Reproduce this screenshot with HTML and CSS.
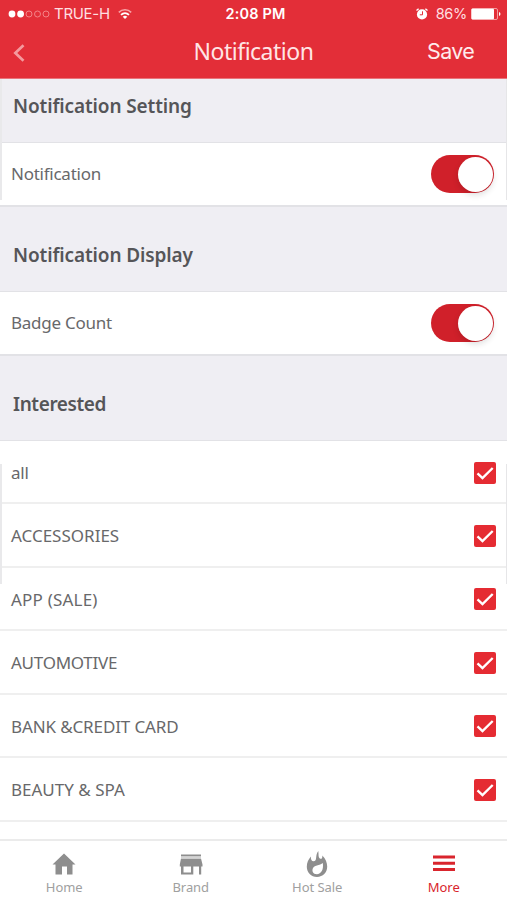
FILE: index.html
```html
<!DOCTYPE html>
<html lang="en">
<head>
<meta charset="utf-8">
<title>Notification</title>
<link rel="stylesheet" href="styles.css">
</head>
<body>
<div class="app">
  <header class="header">
    <div class="status">
      <div class="carrier">
        <svg width="42" height="10" viewBox="0 0 42 10"><g fill="#fff"><circle cx="4" cy="5" r="3.4"/><circle cx="12.6" cy="5" r="3.4"/></g><g fill="none" stroke="#f58b90" stroke-width=".9"><circle cx="21" cy="5" r="3"/><circle cx="29.5" cy="5" r="3"/><circle cx="38" cy="5" r="3"/></g></svg>
        <span class="network">TRUE-H</span>
        <svg class="wifi" width="14" height="12" viewBox="0 0 14 12" fill="none" stroke="#fff"><path d="M.8 4.3a9 9 0 0 1 12.4 0" stroke="#f8a5a8" stroke-width="1.6"/><path d="M3 6.8a6 6 0 0 1 8 0" stroke-width="1.8"/><path d="M4.7 8.7a3.4 3.4 0 0 1 4.6 0L7 11z" fill="#fff" stroke="none"/></svg>
      </div>
      <span class="time">2:08 PM</span>
      <div class="power">
        <svg width="12" height="12" viewBox="0 0 12 12"><circle cx="6" cy="6.4" r="5.1" fill="#fff"/><path d="M.5 2.6 2.6.7M11.5 2.6 9.4.7" stroke="#fff" stroke-width="1.3"/><path d="M6.5 3.3v3.5H3.8" fill="none" stroke="#e32e38"/></svg>
        <span class="percent">86%</span>
        <svg class="battery" width="30" height="12" viewBox="0 0 30 12"><rect x=".5" y=".5" width="26" height="11" rx="1.5" fill="none" stroke="#f8b5b8" stroke-width=".8"/><rect x=".5" y=".7" width="22.5" height="10.6" rx="1" fill="#fff"/><path d="M28 4c2 .7 2 3.3 0 4z" fill="#fff"/></svg>
      </div>
    </div>
    <nav class="navbar">
      <svg class="back" width="12" height="18" viewBox="0 0 12 18"><path d="M10.5 1.3 2.3 9l8.2 7.7" fill="none" stroke="#f49a9e" stroke-width="2.7"/></svg>
      <h1 class="title">Notification</h1>
      <span class="save">Save</span>
    </nav>
  </header>
  <main class="content">
    <section class="edged top">
      <h2 class="section first">Notification Setting</h2>
      <div class="row"><span class="tight">Notification</span><span class="switch"></span></div>
    </section>
    <h2 class="section">Notification Display</h2>
    <div class="row"><span class="tight">Badge Count</span><span class="switch"></span></div>
    <h2 class="section interested">Interested</h2>
    <ul class="list edged middle">
      <li class="item"><span class="tight">all</span><svg class="check" viewBox="0 0 22 22"><path d="m3.5 11.3 5 4.7L18.7 6"/></svg></li>
      <li class="item"><span>ACCESSORIES</span><svg class="check" viewBox="0 0 22 22"><path d="m3.5 11.3 5 4.7L18.7 6"/></svg></li>
      <li class="item"><span class="wide">APP (SALE)</span><svg class="check" viewBox="0 0 22 22"><path d="m3.5 11.3 5 4.7L18.7 6"/></svg></li>
      <li class="item"><span class="tight">AUTOMOTIVE</span><svg class="check" viewBox="0 0 22 22"><path d="m3.5 11.3 5 4.7L18.7 6"/></svg></li>
      <li class="item"><span class="snug">BANK &amp;CREDIT CARD</span><svg class="check" viewBox="0 0 22 22"><path d="m3.5 11.3 5 4.7L18.7 6"/></svg></li>
      <li class="item"><span>BEAUTY &amp; SPA</span><svg class="check" viewBox="0 0 22 22"><path d="m3.5 11.3 5 4.7L18.7 6"/></svg></li>
    </ul>
  </main>
  <footer class="tabs">
    <a class="tab"><svg width="26" height="26" viewBox="0 0 26 26"><path fill="currentColor" d="M13 1.500 24.500 12.500H21.500V22.500h-5.500v-8h-5v8H4.500V12.500h-3z"/></svg><span>Home</span></a>
    <a class="tab"><svg width="26" height="26" viewBox="0 0 26 26"><path fill="currentColor" fill-rule="evenodd" d="M3 2.500h20v2H3zM3 6.500h20l1.500 6v2h-1.300v8h-2.200v-8h-5.700v8H3v-8H1.800v-2zM5.500 14.500v6h7.500v-6z"/><path d="M3 4.500h20v2H3z" fill="#d4d4d4"/></svg><span>Brand</span></a>
    <a class="tab"><svg width="26" height="28" viewBox="0 0 26 28"><path fill="currentColor" fill-rule="evenodd" d="M14.300 1c.5 3.200-.3 6 1.500 7.500 1.600 1 2.900-.7 2.500-3.100 3.300 3.200 4.900 7 4.900 11.200 0 6-4.400 10.400-10.200 10.400S2.800 22.600 2.800 16.800c0-4.200 1.700-7.500 4.100-10.300-.2 3 .7 4.800 2.600 4.800 4.300 0 1.200-5.900 4.800-10.300zM18.800 13c-2.500 2.600-9.600 1.800-10.300 6.500-.4 3 1.600 4.700 4.300 4.700 4.400 0 7-4.700 6-11.200z"/></svg><span>Hot Sale</span></a>
    <a class="tab active"><svg width="26" height="26" viewBox="0 0 26 26"><path fill="currentColor" d="M2 3.500h22v3H2zm0 6.200h22v3H2zm0 6.300h22v3H2z"/></svg><span>More</span></a>
  </footer>
</div>
</body>
</html>
```
FILE: styles.css
```css
* { box-sizing: border-box; }
body { margin: 0; font-family: "Noto Sans", sans-serif; background: #fff; color: #68686a; }
.app { width: 507px; height: 900px; display: flex; flex-direction: column; overflow: hidden; }
svg { display: block; flex: none; }
.header { height: 79px; flex: none; background: #e32e38; color: #fff; border-bottom: 1px solid #e8747b; }
.status { height: 27px; display: grid; grid-template-columns: 1fr auto 1fr; align-items: center; font: 15px/27px Inter, sans-serif; padding: 0 6px 0 8px; }
.carrier, .power { display: flex; align-items: center; color: #ffdfe0; }
.power { justify-content: flex-end; }
.network { margin-left: 4px; letter-spacing: -.3px; }
.wifi { margin-left: 8px; }
.time { font-weight: 600; font-size: 14.5px; letter-spacing: .15px; padding-left: 2px; }
.percent { margin: 0 4px 0 8px; font-size: 14.5px; letter-spacing: -.3px; }
.navbar { height: 51px; display: grid; grid-template-columns: 1fr auto 1fr; align-items: center; padding: 0 33px 0 13px; }
.title { margin: 0 0 0 20px; font-size: 23px; line-height: 48px; height: 51px; font-weight: 400; letter-spacing: -.5px; color: #ffe5e6; }
.save { justify-self: end; height: 51px; font: 21.5px/49px Inter, sans-serif; letter-spacing: -.7px; color: #ffebec; }
.content { flex: 1; min-height: 0; overflow: hidden; }
.edged { position: relative; }
.edged::before { content: ""; position: absolute; left: 0; right: 0; top: 0; height: 121px; border-left: 2px solid #e9e9eb; border-right: 1px solid #e6e6e8; }
.middle::before { top: 23px; height: 120px; }
.section { margin: 0; height: 87px; padding: 12px 13px 0; display: flex; align-items: center; background: #efeef3; border-top: 2px solid #e2e2e6; border-bottom: 1px solid #e2e2e6; font-size: 19px; font-weight: 650; letter-spacing: -.12px; color: #555558; }
.section.first { height: 64px; padding: 0 13px 9px; border-top: 0; }
.section.interested { letter-spacing: -.4px; }
.row { height: 62px; padding: 0 13px 0 11px; display: flex; align-items: center; justify-content: space-between; font-size: 17px; }
.row span:first-child { padding-bottom: 1px; }
.tight { letter-spacing: -.25px; }
.snug { letter-spacing: -.12px; }
.wide { letter-spacing: .2px; }
.switch { width: 63px; height: 38px; padding: 1.5px; border-radius: 19px; background: #d0202a; display: flex; justify-content: flex-end; }
.switch::after { content: ""; width: 35px; height: 35px; border-radius: 50%; background: #fff; box-shadow: 0 3px 6px #0002; }
.list { margin: 0; padding: 0; list-style: none; }
.item { height: 63.5px; padding: 2px 11px 0; display: flex; align-items: center; justify-content: space-between; border-bottom: 2px solid #efefef; font-size: 17px; }
.item:first-child { height: 63px; }
.check { width: 22px; height: 22px; border-radius: 2px; background: #e52b32; fill: none; stroke: #fff; stroke-width: 2.4; }
.tabs { height: 61px; flex: none; display: grid; grid-template-columns: repeat(4, 126.5px); padding-left: 1px; border-top: 2px solid #ebebeb; background: #fff; color: #8e8e8e; font-size: 13px; line-height: 18px; }
.tab { display: flex; flex-direction: column; align-items: center; justify-content: flex-end; padding-bottom: 4px; }
.tab span { color: #a0a0a0; letter-spacing: -.05px; }
.tab.active, .tab.active span { color: #d9252d; }
```
